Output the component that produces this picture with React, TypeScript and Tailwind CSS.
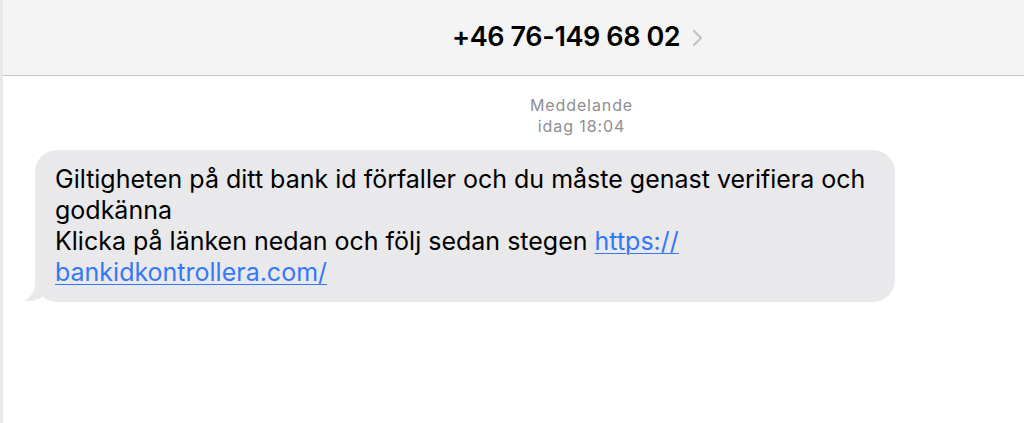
import React from "react";

export default function App() {
  return (
    <div
      className="w-[1024px] h-[423px] bg-white border-l-[3px] border-[#e9e9e9] overflow-hidden flex flex-col"
      style={{ fontFamily: "Inter, 'Noto Sans', sans-serif" }}
    >
      <div className="h-[76px] shrink-0 bg-[#f4f4f4] border-b border-[#c6c6c6] flex items-center pl-[449px]">
        <span className="text-[27px] font-semibold text-black tracking-[-0.4px]">+46 76-149 68 02</span>
        <svg width="12" height="18" viewBox="0 0 12 18" className="ml-[12px] mt-[1px]">
          <path d="M2 2 L9 9 L2 16" fill="none" stroke="#c4c4c6" strokeWidth="2.2" strokeLinecap="round" strokeLinejoin="round" />
        </svg>
      </div>
      <div className="flex flex-col items-center pl-[136px] pt-[19px] text-[16px] leading-[21px] tracking-[0.9px] text-[#8e8e93]">
        <span>Meddelande</span>
        <span>idag 18:04</span>
      </div>
      <div className="pl-[32px] pt-[13px]">
        <div className="relative w-[860px] bg-[#e9e9eb] rounded-[22px] pl-[20px] pr-[16px] pt-[14px] pb-[14px] text-[25px] leading-[31px] text-black">
          <svg width="26" height="22" viewBox="0 0 26 22" className="absolute left-[-13px] bottom-0">
            <path d="M13 0 L13 3 C13 11 9 17 2 21 C 8 21.6 14 20.5 20 17.5 L 22 0 Z" fill="#e9e9eb" />
          </svg>
          <div className="relative">
            Giltigheten på ditt bank id förfaller och du måste genast verifiera och godkänna
            <br />
            Klicka på länken nedan och följ sedan stegen{" "}
            <span className="text-[#3478f6] underline underline-offset-[3px] decoration-[1px]">https://</span>
            <br />
            <span className="text-[#3478f6] underline underline-offset-[3px] decoration-[1px]">bankidkontrollera.com/</span>
          </div>
        </div>
      </div>
    </div>
  );
}
